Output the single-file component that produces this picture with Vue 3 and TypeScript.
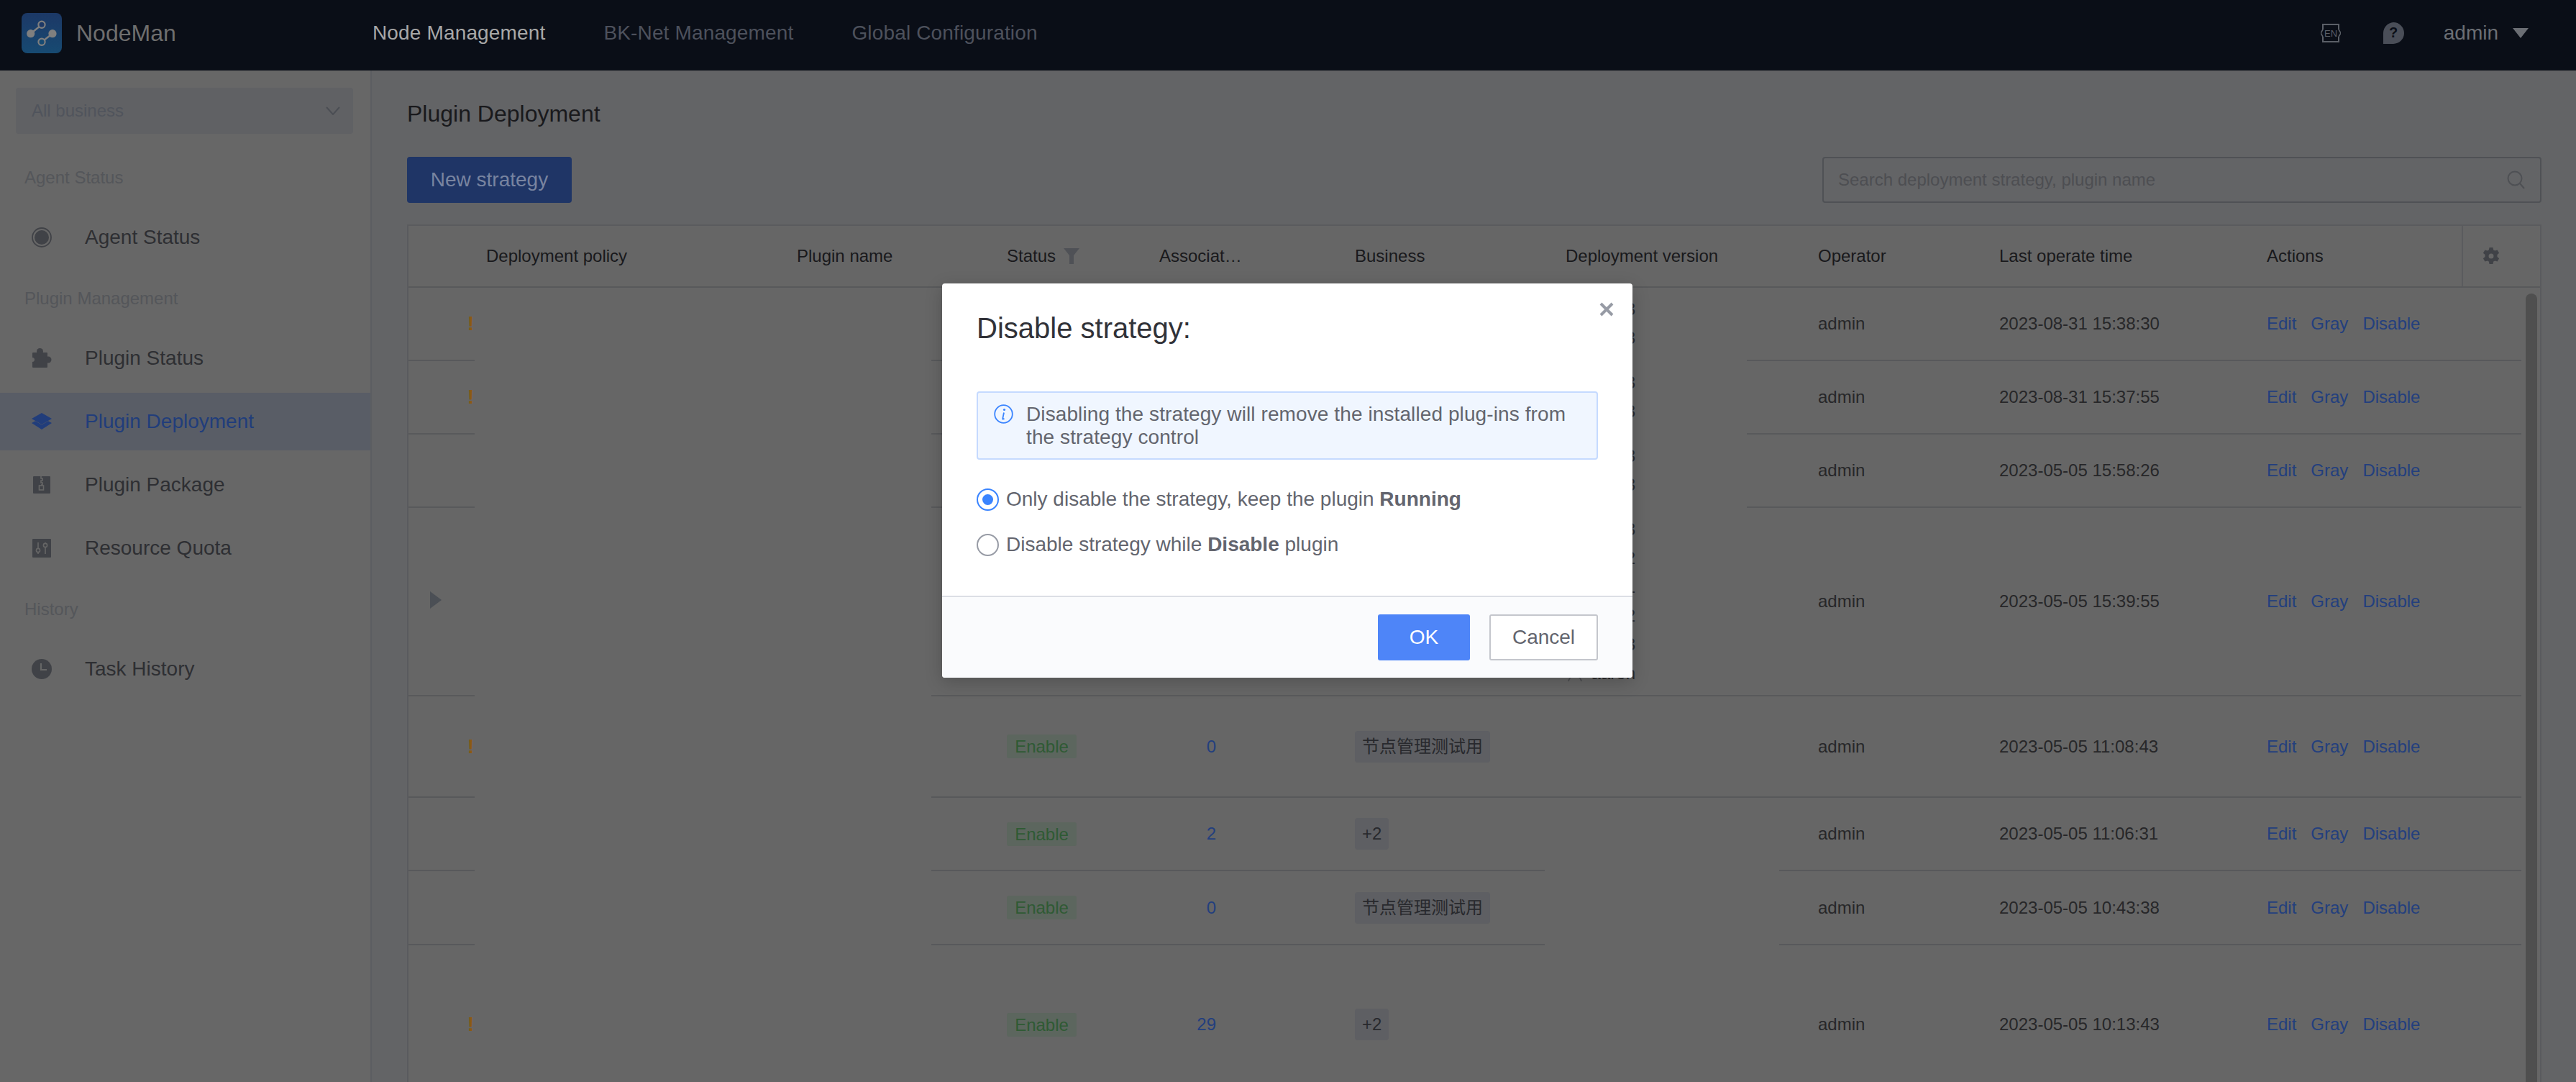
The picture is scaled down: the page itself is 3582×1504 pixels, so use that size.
<template>
  <div class="app">
    <header class="nav">
      <div class="brand">
        <svg class="logo" width="56" height="56" viewBox="0 0 56 56">
          <defs>
            <linearGradient id="logoFill" x1="0" y1="0" x2="0" y2="1">
              <stop offset="0" stop-color="#1c3866" />
              <stop offset="1" stop-color="#174a72" />
            </linearGradient>
          </defs>
          <rect width="56" height="56" rx="8" fill="url(#logoFill)" />
          <path d="M12.7 28.7 28 16.3M43 28.7 28 40.3" stroke="#7f7f7f" stroke-width="2.4" />
          <circle cx="12.7" cy="28.7" r="5.6" fill="#7f7f7f" />
          <circle cx="43" cy="28.7" r="5.6" fill="#7f7f7f" />
          <circle cx="28" cy="16.3" r="4.6" fill="#1c3866" stroke="#7f7f7f" stroke-width="2.2" />
          <circle cx="28" cy="40.3" r="4.6" fill="#174a72" stroke="#7f7f7f" stroke-width="2.2" />
        </svg>
        <span class="brand-name">NodeMan</span>
      </div>
      <nav class="nav-links">
        <a class="nav-link active">Node Management</a>
        <a class="nav-link">BK-Net Management</a>
        <a class="nav-link">Global Configuration</a>
      </nav>
      <div class="nav-right">
        <svg class="lang" width="28" height="28" viewBox="0 0 28 28">
          <path d="M3 9V2h22v7M25 19v7H3v-7" fill="none" stroke="#5b5f67" stroke-width="2" />
          <path d="M3 9 0 14l3 5M25 9l3 5-3 5" fill="none" stroke="#5b5f67" stroke-width="1.6" />
          <text x="14" y="19" text-anchor="middle" class="lang-text">EN</text>
        </svg>
        <svg class="help" width="32" height="32" viewBox="0 0 32 32">
          <path d="M16 1a15 15 0 1 1 0 30H2V16A15 15 0 0 1 16 1Z" fill="#4a4e58" />
          <text x="16" y="22" text-anchor="middle" class="help-text">?</text>
        </svg>
        <span class="user">admin</span>
        <span class="caret"></span>
      </div>
    </header>

    <div class="body">
      <aside class="side">
        <div class="biz-select">
          <span>All business</span>
          <svg width="20" height="12" viewBox="0 0 20 12">
            <path d="M1 1l9 10 9-10" fill="none" stroke="#4b4e54" stroke-width="2" />
          </svg>
        </div>

        <section v-for="group in menu" :key="group.title" class="menu-group">
          <div class="menu-title">{{ group.title }}</div>
          <div class="menu-items">
            <div
              v-for="item in group.items"
              :key="item.label"
              class="menu-item"
              :class="{ current: item.label === 'Plugin Deployment' }"
            >
              <svg class="menu-icon" width="28" height="28" viewBox="0 0 28 28">
                <template v-if="item.icon === 'agent'">
                  <circle cx="14" cy="14" r="13" fill="none" stroke="currentColor" stroke-width="1.8" />
                  <circle cx="14" cy="14" r="10" fill="currentColor" />
                </template>
                <template v-else-if="item.icon === 'puzzle'">
                  <rect x="1" y="6" width="21" height="21" rx="1" fill="currentColor" />
                  <circle cx="11.500" cy="4.500" r="4.500" fill="currentColor" />
                  <circle cx="23" cy="16" r="4.500" fill="currentColor" />
                  <circle cx="1" cy="16" r="3" fill="#666" />
                </template>
                <template v-else-if="item.icon === 'layers'">
                  <path d="M14 2 28 10 14 18 0 10Z" fill="currentColor" />
                  <path d="M0 16l5-2.8 9 5.3 9-5.3 5 2.8-14 9Z" fill="currentColor" />
                </template>
                <template v-else-if="item.icon === 'zip'">
                  <rect x="2" y="2" width="24" height="24" rx="1" fill="currentColor" />
                  <path d="M13 2v3h2v3h-2v3h2v3h-2" fill="none" stroke="#666" stroke-width="1.6" />
                  <rect x="10.500" y="15" width="6" height="6" fill="none" stroke="#666" stroke-width="1.6" />
                </template>
                <template v-else-if="item.icon === 'quota'">
                  <rect x="1" y="1" width="26" height="26" rx="1" fill="currentColor" />
                  <path d="M9 6v16M19 6v16" stroke="#666" stroke-width="1.6" />
                  <circle cx="9" cy="17" r="2.600" fill="#404247" stroke="#666" stroke-width="1.6" />
                  <circle cx="19" cy="10" r="2.600" fill="#404247" stroke="#666" stroke-width="1.6" />
                </template>
                <template v-else>
                  <circle cx="14" cy="14" r="14" fill="currentColor" />
                  <path d="M13 6v9h8" fill="none" stroke="#666" stroke-width="2.2" />
                </template>
              </svg>
              <span>{{ item.label }}</span>
            </div>
          </div>
        </section>
      </aside>

      <main class="main">
        <h1 class="page-title">Plugin Deployment</h1>
        <div class="toolbar">
          <button class="new-btn">New strategy</button>
          <div class="search">
            <span>Search deployment strategy, plugin name</span>
            <svg width="26" height="26" viewBox="0 0 26 26">
              <circle cx="11" cy="11" r="9.5" fill="none" stroke="#4e5054" stroke-width="2" />
              <path d="M18 18l6 7" stroke="#4e5054" stroke-width="2" />
            </svg>
          </div>
        </div>

        <div class="table">
          <div class="head">
            <div></div>
            <div class="th">Deployment policy</div>
            <div class="th">Plugin name</div>
            <div class="th">
              Status
              <svg class="funnel" width="22" height="22" viewBox="0 0 22 22">
                <path d="M0 0h22l-8 10v12H8V10Z" fill="#4f5156" />
              </svg>
            </div>
            <div class="th">Associat…</div>
            <div class="th">Business</div>
            <div class="th">Deployment version</div>
            <div class="th">Operator</div>
            <div class="th">Last operate time</div>
            <div class="th">Actions</div>
            <div class="th-gear">
              <svg width="24" height="24" viewBox="0 0 24 24">
                <path
                  fill="#404247"
                  fill-rule="evenodd"
                  d="M9.5 0h5l.7 3.4 2.1 1.2 3.3-1.1 2.5 4.3-2.6 2.3v2.8l2.6 2.3-2.5 4.3-3.3-1.1-2.1 1.2-.7 3.4h-5l-.7-3.4-2.1-1.2-3.3 1.1-2.5-4.3 2.6-2.3v-2.8L.9 7.8l2.5-4.3 3.3 1.1 2.1-1.2ZM12 8.500a3.500 3.500 0 1 0 0 7 3.500 3.500 0 0 0 0-7Z"
                />
              </svg>
            </div>
          </div>

          <div
            v-for="row in rows"
            :key="row.time"
            class="row"
            :style="{ height: row.height + 'px' }"
          >
            <div class="lead">
              <svg v-if="row.expand" class="expand" width="16" height="24" viewBox="0 0 16 24">
                <path d="M0 0l16 12L0 24Z" fill="#4b4f55" />
              </svg>
              <span v-if="row.warn" class="warn">!</span>
            </div>
            <div></div>
            <div></div>
            <div class="cell"><span class="tag-on">Enable</span></div>
            <div class="cell"><a class="count">{{ row.count }}</a></div>
            <div class="cell"><span class="tag-biz">{{ row.biz }}</span></div>
            <div class="versions">
              <div v-for="(line, i) in row.versions" :key="i" class="version">
                <svg v-if="line === 'aaron'" class="avatar" width="20" height="20" viewBox="0 0 20 20">
                  <circle cx="10" cy="7" r="5" fill="none" stroke="#4a4b4e" stroke-width="1.4" />
                  <path d="M1 19c1-5 5-7 9-7s8 2 9 7" fill="none" stroke="#4a4b4e" stroke-width="1.4" />
                </svg>
                {{ line }}
              </div>
            </div>
            <div class="cell">admin</div>
            <div class="cell">{{ row.time }}</div>
            <div class="cell actions">
              <a>Edit</a>
              <a>Gray</a>
              <a>Disable</a>
            </div>
            <i
              v-for="gap in row.gaps"
              :key="gap[0]"
              class="line-gap"
              :style="{ left: gap[0] + 'px', width: gap[1] + 'px' }"
            ></i>
          </div>
          <div class="scroll-thumb"></div>
        </div>
      </main>
    </div>

    <div class="dialog-layer">
      <div class="dialog">
        <svg class="close" width="20" height="20" viewBox="0 0 20 20">
          <path d="M2 2l16 16M18 2 2 18" stroke="#979ba5" stroke-width="4" />
        </svg>
        <div class="dialog-body">
          <h2 class="dialog-title">Disable strategy:</h2>
          <div class="alert">
            <svg class="alert-icon" width="27" height="27" viewBox="0 0 27 27">
              <circle cx="13.500" cy="13.500" r="12.300" fill="none" stroke="#3a84ff" stroke-width="1.800" />
              <circle cx="14.500" cy="7.500" r="1.600" fill="#3a84ff" />
              <path d="M14 11.500l-1.800 8.500c-.2 1 .8 1 2.300-.2" fill="none" stroke="#3a84ff" stroke-width="1.800" />
            </svg>
            <p>Disabling the strategy will remove the installed plug-ins from the strategy control</p>
          </div>
          <label class="radio first">
            <span class="dot on"></span>
            <span>Only disable the strategy, keep the plugin <b>Running</b></span>
          </label>
          <label class="radio">
            <span class="dot"></span>
            <span>Disable strategy while <b>Disable</b> plugin</span>
          </label>
        </div>
        <div class="dialog-foot">
          <button class="ok">OK</button>
          <button class="cancel">Cancel</button>
        </div>
      </div>
    </div>
  </div>
</template>

<script setup lang="ts">
interface MenuItem {
  label: string;
  icon: string;
}
interface Row {
  height: number;
  time: string;
  count: number;
  biz: string;
  warn?: boolean;
  expand?: boolean;
  versions: string[];
  gaps: [number, number][];
}

const menu: { title: string; items: MenuItem[] }[] = [
  { title: 'Agent Status', items: [{ label: 'Agent Status', icon: 'agent' }] },
  {
    title: 'Plugin Management',
    items: [
      { label: 'Plugin Status', icon: 'puzzle' },
      { label: 'Plugin Deployment', icon: 'layers' },
      { label: 'Plugin Package', icon: 'zip' },
      { label: 'Resource Quota', icon: 'quota' },
    ],
  },
  { title: 'History', items: [{ label: 'Task History', icon: 'clock' }] },
];

const BIZ = '节点管理测试用';
// the stretches of each row's bottom line that stay blank in the reference
const left: [number, number] = [92, 635];
const upper: [number, number] = [1579, 282];
const lower: [number, number] = [1580, 326];

const rows: Row[] = [
  { height: 102, time: '2023-08-31 15:38:30', count: 0, biz: BIZ, warn: true, versions: ['1.3', '1.3'], gaps: [left, upper] },
  { height: 102, time: '2023-08-31 15:37:55', count: 0, biz: BIZ, warn: true, versions: ['1.3', '1.3'], gaps: [left, upper] },
  { height: 102, time: '2023-05-05 15:58:26', count: 0, biz: BIZ, versions: ['1.3', '1.3'], gaps: [left, upper] },
  { height: 262, time: '2023-05-05 15:39:55', count: 2, biz: '+2', expand: true, versions: ['1.3', '1.2', '1.1', '1.2', '1.3', 'aaron'], gaps: [left] },
  { height: 141, time: '2023-05-05 11:08:43', count: 0, biz: BIZ, warn: true, versions: [], gaps: [left] },
  { height: 102, time: '2023-05-05 11:06:31', count: 2, biz: '+2', versions: [], gaps: [left, lower] },
  { height: 103, time: '2023-05-05 10:43:38', count: 0, biz: BIZ, versions: [], gaps: [left, lower] },
  { height: 222, time: '2023-05-05 10:13:43', count: 29, biz: '+2', warn: true, versions: [], gaps: [left] },
];
</script>

<style>
html,
body {
  margin: 0;
  overflow: hidden;
  background: #666;
}
</style>

<style scoped>
.app {
  position: relative;
  width: 3582px;
  height: 1504px;
  overflow: hidden;
  display: flex;
  flex-direction: column;
  font-family: "Liberation Sans", "Noto Sans CJK SC", sans-serif;
  font-size: 24px;
  color: #272729;
}

/* top bar */
.nav {
  flex: none;
  height: 98px;
  box-sizing: border-box;
  display: flex;
  align-items: center;
  background: #0a0e17;
  padding: 0 0 6px 30px;
}
.brand {
  display: flex;
  align-items: center;
  gap: 20px;
  width: 488px;
}
.logo {
  flex: none;
}
.brand-name {
  font-size: 32px;
  color: #6e6e6e;
}
.nav-links {
  display: flex;
  gap: 81px;
  font-size: 28px;
  letter-spacing: 0.15px;
  color: #4d515c;
}
.nav-link.active {
  color: #a8a8a8;
}
.nav-right {
  margin-left: auto;
  display: flex;
  align-items: center;
  padding-right: 66px;
}
.lang-text {
  font-size: 13px;
  fill: #5b5f67;
}
.help {
  margin-left: 57px;
}
.help-text {
  font-size: 20px;
  font-weight: 700;
  fill: #0a0e17;
}
.user {
  margin-left: 54px;
  font-size: 28px;
  color: #6b6e74;
}
.caret {
  margin-left: 20px;
  width: 0;
  height: 0;
  border-left: 11px solid transparent;
  border-right: 11px solid transparent;
  border-top: 14px solid #6b6e74;
}

.body {
  flex: 1;
  min-height: 0;
  display: flex;
}

/* side menu */
.side {
  flex: none;
  width: 517px;
  box-sizing: border-box;
  padding-top: 24px;
  background: #676767;
  border-right: 2px solid #5c5e62;
}
.biz-select {
  height: 64px;
  margin: 0 24px 41px 22px;
  padding: 0 18px 0 22px;
  display: flex;
  align-items: center;
  justify-content: space-between;
  background: #606164;
  border-radius: 4px;
  color: #50545c;
}
.menu-group {
  margin-top: 25px;
}
.menu-title {
  height: 40px;
  line-height: 40px;
  padding-left: 34px;
  color: #54565a;
  margin-bottom: 23px;
}
.menu-items {
  display: flex;
  flex-direction: column;
  gap: 8px;
}
.menu-item {
  height: 80px;
  display: flex;
  align-items: center;
  padding-left: 44px;
  font-size: 28px;
  color: #2e2f33;
}
.menu-icon {
  flex: none;
  margin-right: 46px;
  color: #404247;
}
.menu-item.current {
  background: #595d66;
  color: #213d7b;
}
.menu-item.current .menu-icon {
  color: #213d7b;
}

/* content */
.main {
  flex: 1;
  min-width: 0;
  padding: 40px 48px 0 49px;
  background: #636466;
}
.page-title {
  margin: 0 0 40px;
  font-size: 32px;
  line-height: 40px;
  font-weight: 400;
  color: #19191c;
}
.toolbar {
  display: flex;
  justify-content: space-between;
  margin-bottom: 30px;
}
.new-btn {
  width: 229px;
  height: 64px;
  border: 0;
  border-radius: 4px;
  background: #1f3566;
  color: #7884a0;
  font: inherit;
  font-size: 28px;
}
.search {
  width: 1000px;
  height: 64px;
  box-sizing: border-box;
  padding: 0 20px;
  display: flex;
  align-items: center;
  justify-content: space-between;
  border: 2px solid #4f5155;
  border-radius: 4px;
  color: #4d4e52;
}

.table {
  position: relative;
  border: 2px solid #5a5b5e;
  border-bottom: 0;
  background: #666;
}
.head,
.row {
  display: grid;
  grid-template-columns: 92px 432px 292px 212px 272px 293px 351px 252px 372px 287px 109px;
}
.head {
  height: 86px;
  box-sizing: border-box;
  border-bottom: 2px solid #58595b;
  color: #19191c;
}
.th {
  padding-left: 16px;
  display: flex;
  align-items: center;
}
.funnel {
  margin-left: 11px;
}
.th-gear {
  border-left: 2px solid #5a5b5e;
  padding-left: 27px;
  display: flex;
  align-items: center;
}
.row {
  position: relative;
  width: 2938px;
  grid-template-columns: 92px 432px 292px 212px 272px 293px 351px 252px 372px 287px;
  box-sizing: border-box;
  border-bottom: 2px solid #58595b;
}
.line-gap {
  position: absolute;
  bottom: -2px;
  height: 2px;
  background: #666;
}
.lead {
  display: flex;
  align-items: center;
  justify-content: flex-end;
  position: relative;
}
.expand {
  position: absolute;
  left: 30px;
  top: calc(50% - 14px);
}
.warn {
  padding-right: 1px;
  font-size: 28px;
  font-weight: 700;
  color: #8a5a14;
}
.cell {
  padding-left: 16px;
  display: flex;
  align-items: center;
}
.tag-on {
  width: 97px;
  height: 33px;
  line-height: 33px;
  text-align: center;
  border-radius: 3px;
  background: #5c665e;
  color: #2f5a34;
}
.count {
  width: 79px;
  text-align: right;
  color: #233f7e;
}
.tag-biz {
  height: 44px;
  line-height: 44px;
  padding: 0 10px;
  border-radius: 4px;
  background: #5e5f63;
  color: #28292d;
}
.versions {
  width: 113px;
  display: flex;
  flex-direction: column;
  justify-content: center;
  text-align: right;
  line-height: 40px;
}
.version {
  position: relative;
}
.avatar {
  position: absolute;
  left: 19px;
  top: 12px;
}
.actions {
  gap: 20px;
  color: #233f7e;
}
.scroll-thumb {
  position: absolute;
  top: 94px;
  right: 4px;
  bottom: -40px;
  width: 16px;
  border-radius: 8px;
  background: #4f4f4f;
}

/* dialog */
.dialog-layer {
  position: absolute;
  inset: 0;
  display: flex;
  justify-content: center;
  align-items: flex-start;
  padding: 394px 2px 0 0;
  box-sizing: border-box;
}
.dialog {
  position: relative;
  width: 960px;
  background: #fff;
  border-radius: 4px;
  box-shadow: 0 6px 24px rgba(0, 0, 0, 0.2);
  color: #63656e;
  font-size: 28px;
  overflow: hidden;
}
.close {
  position: absolute;
  top: 26px;
  right: 26px;
}
.dialog-body {
  padding: 38px 48px 51px 48px;
}
.dialog-title {
  margin: 0 0 64px;
  font-size: 40px;
  line-height: 48px;
  font-weight: 400;
  color: #313238;
}
.alert {
  display: flex;
  box-sizing: border-box;
  height: 95px;
  padding: 13.5px 22px;
  gap: 18px;
  background: #f0f6ff;
  border: 2px solid #c5daff;
  border-radius: 4px;
}
.alert-icon {
  flex: none;
  margin-top: 2px;
}
.alert p {
  margin: 0;
  line-height: 32px;
  letter-spacing: 0.1px;
}
.radio {
  display: flex;
  align-items: center;
  gap: 10px;
  height: 40px;
  margin-top: 23px;
}
.radio.first {
  margin-top: 35px;
}
.dot {
  flex: none;
  width: 31px;
  height: 31px;
  box-sizing: border-box;
  border: 2px solid #979ba5;
  border-radius: 50%;
  display: flex;
  align-items: center;
  justify-content: center;
}
.dot.on {
  border-color: #3a84ff;
}
.dot.on::after {
  content: '';
  width: 15px;
  height: 15px;
  border-radius: 50%;
  background: #3a84ff;
}
.dialog-foot {
  display: flex;
  justify-content: flex-end;
  gap: 27px;
  padding: 24px 48px;
  background: #fafbfd;
  border-top: 2px solid #dcdee5;
}
.dialog-foot button {
  height: 64px;
  font: inherit;
  font-size: 28px;
  border-radius: 3px;
}
.ok {
  width: 128px;
  border: 0;
  background: #4e85f8;
  color: #fff;
}
.cancel {
  width: 151px;
  background: #fff;
  border: 2px solid #c4c6cc;
  color: #63656e;
}
</style>
